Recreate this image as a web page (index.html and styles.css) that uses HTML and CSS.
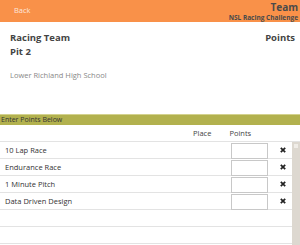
FILE: index.html
```html
<!DOCTYPE html>
<html>
<head>
<meta name="viewport" content="width=device-width, initial-scale=1">
<link rel="stylesheet" href="styles.css">
</head>
<body>

<div class="topbar">
  <span class="back">Back</span>
  <div class="titles">
    <div class="title">Team</div>
    <div class="subtitle">NSL Racing Challenge</div>
  </div>
</div>

<div class="team">
  <div class="team-row">
    <span class="team-name">Racing Team</span>
    <span class="team-points">Points</span>
  </div>
  <div class="pit">Pit 2</div>
  <div class="school">Lower Richland High School</div>
</div>

<div class="banner">Enter Points Below</div>

<div class="cols">
  <span class="col-place">Place</span>
  <span class="col-points">Points</span>
</div>

<div class="list-wrap">
  <div class="list">
    <div class="row">
      <span class="event">10 Lap Race</span>
      <input type="text" class="pts">
      <span class="del"><svg width="6" height="6" viewBox="0 0 6 6"><path d="M0.8 0.8L5.2 5.2M5.2 0.8L0.8 5.2" stroke="#222" stroke-width="1.7"/></svg></span>
    </div>
    <div class="row">
      <span class="event">Endurance Race</span>
      <input type="text" class="pts">
      <span class="del"><svg width="6" height="6" viewBox="0 0 6 6"><path d="M0.8 0.8L5.2 5.2M5.2 0.8L0.8 5.2" stroke="#222" stroke-width="1.7"/></svg></span>
    </div>
    <div class="row">
      <span class="event">1 Minute Pitch</span>
      <input type="text" class="pts">
      <span class="del"><svg width="6" height="6" viewBox="0 0 6 6"><path d="M0.8 0.8L5.2 5.2M5.2 0.8L0.8 5.2" stroke="#222" stroke-width="1.7"/></svg></span>
    </div>
    <div class="row">
      <span class="event">Data Driven Design</span>
      <input type="text" class="pts">
      <span class="del"><svg width="6" height="6" viewBox="0 0 6 6"><path d="M0.8 0.8L5.2 5.2M5.2 0.8L0.8 5.2" stroke="#222" stroke-width="1.7"/></svg></span>
    </div>
    <div class="row"></div>
    <div class="row"></div>
  </div>
  <div class="scrollbar"><div class="arrow"></div></div>
</div>

</body>
</html>
```
FILE: styles.css
```css
body {
  margin: 0;
  font-family: "Open Sans", Arial, sans-serif;
  color: #333;
  background: #fff;
  overflow: hidden;
}

/* Orange top bar */
.topbar {
  height: 22px;
  background-color: #f99149;
  display: flex;
  justify-content: space-between;
  align-items: flex-start;
  padding: 0 2px 0 14px;
}

.back {
  font-size: 7.5px;
  color: rgba(255,255,255,0.8);
  line-height: 20px;
}

.titles {
  text-align: right;
  font-weight: bold;
  color: #4a4a4a;
}

.title {
  font-size: 10px;
  line-height: 13px;
  margin-top: 1px;
}

.subtitle {
  font-size: 6.5px;
  line-height: 7px;
}

/* Team info */
.team {
  padding: 9px 5px 0 10px;
  height: 83px;
}

.team-row {
  display: flex;
  justify-content: space-between;
  font-size: 9.5px;
  font-weight: bold;
  color: #444;
  line-height: 14px;
}

.pit {
  font-size: 9.5px;
  font-weight: bold;
  color: #444;
  line-height: 14px;
}

.school {
  font-size: 7.5px;
  color: #888;
  margin-top: 11px;
}

.banner {
  background-color: #b2b14e;
  border-top: 1px solid #d3d28e;
  height: 10px;
  line-height: 10px;
  font-size: 7px;
  color: #333;
  padding-left: 1px;
}

.cols {
  display: flex;
  height: 16px;
  align-items: center;
  font-size: 7.5px;
  color: #444;
  border-bottom: 1px solid #e3e3e3;
}

.col-place {
  margin-left: 193px;
}

.col-points {
  margin-left: 18px;
}

/* Event list */
.list-wrap {
  display: flex;
}

.list {
  flex: 1;
}

.row {
  display: flex;
  align-items: center;
  height: 16px;
  border-bottom: 1px solid #e3e3e3;
  font-size: 7.5px;
  color: #333;
}

.event {
  flex: 1;
  padding-left: 5px;
}

.pts {
  width: 37px;
  height: 16px;
  box-sizing: border-box;
  border: 1px solid #c8c8c8;
  margin: 1px 0 0 0;
  padding: 0;
}

.del {
  width: 24px;
  display: flex;
  justify-content: flex-end;
  align-items: center;
  padding-right: 6px;
  box-sizing: border-box;
}

.scrollbar {
  width: 8px;
  background-color: #ddd8d0;
  height: 110px;
  padding-top: 2px;
}

.arrow {
  width: 4px;
  height: 4px;
  margin-left: 2px;
  background-color: #f0ede8;
}
```
